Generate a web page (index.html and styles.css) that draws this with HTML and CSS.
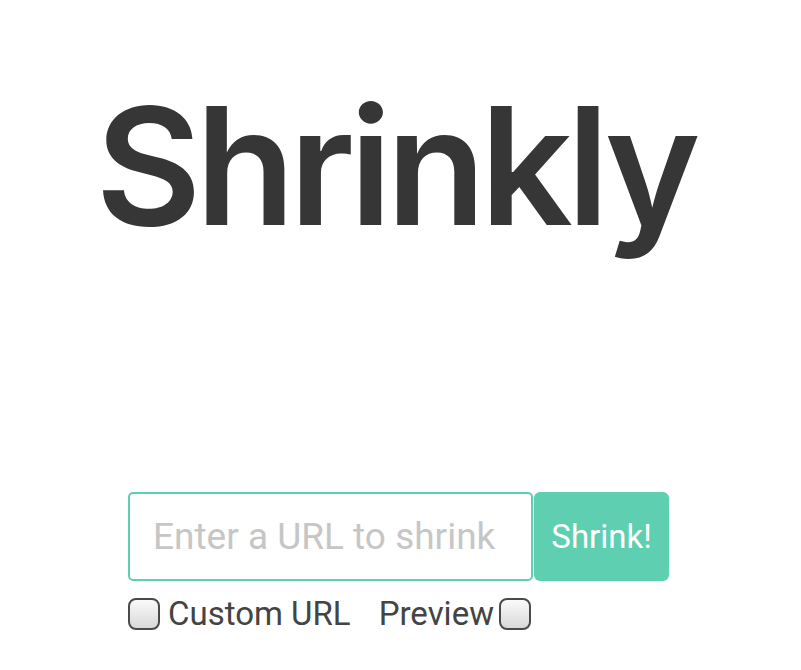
FILE: index.html
```html
<!DOCTYPE html>
<html>
<head>
<meta charset="utf-8">
<title>Shrinkly</title>
<link rel="stylesheet" href="styles.css">
</head>
<body>
<main class="page">
  <h1 class="title">Shrinkly</h1>
  <form class="shrink-form">
    <div class="row">
      <input class="url-input" type="text" placeholder="Enter a URL to shrink">
      <button class="shrink-btn" type="button">Shrink!</button>
    </div>
    <div class="options">
      <label class="opt"><input class="box" type="checkbox"><span>Custom URL</span></label>
      <label class="opt opt-preview"><span>Preview</span><input class="box" type="checkbox"></label>
    </div>
  </form>
</main>
</body>
</html>
```
FILE: styles.css
```css
* { box-sizing: border-box; }
html, body { margin: 0; background: #fff; }
body { font-family: Roboto, "Liberation Sans", sans-serif; color: #383838; }
.page { display: flex; flex-direction: column; align-items: center; padding-top: 66px; }
.title {
  margin: 0 0 0 -11px;
  font-family: Inter, "Liberation Sans", sans-serif;
  font-weight: 600;
  font-size: 163px;
  line-height: 200px;
  letter-spacing: -6px;
  color: #363636;
}
.shrink-form { margin-top: 226px; margin-left: -4px; display: flex; flex-direction: column; }
.row { display: flex; }
.url-input {
  width: 405px; height: 89px;
  border: 2px solid #5ecfb1; border-radius: 5px;
  padding: 0 0 0 23px;
  font-family: Roboto, sans-serif; font-size: 37px; color: #333;
  outline: none;
}
.url-input::placeholder { color: #c6c6c6; }
.shrink-btn {
  width: 135px; height: 89px; margin-left: 1px;
  border: none; border-radius: 6px;
  background: #5ecfb1; color: #fff;
  font-family: Roboto, sans-serif; font-size: 33px; padding: 0;
}
.options { display: flex; align-items: center; margin-top: 13px; gap: 28px; font-size: 33px; color: #444; }
.opt { display: flex; align-items: center; gap: 8px; }
.opt-preview { gap: 5px; }
.box {
  appearance: none; -webkit-appearance: none; margin: 0;
  width: 32px; height: 32px;
  border: 2px solid #4a4a4a; border-radius: 8px;
  background: linear-gradient(#fafafa, #d8d8d8);
}
```
